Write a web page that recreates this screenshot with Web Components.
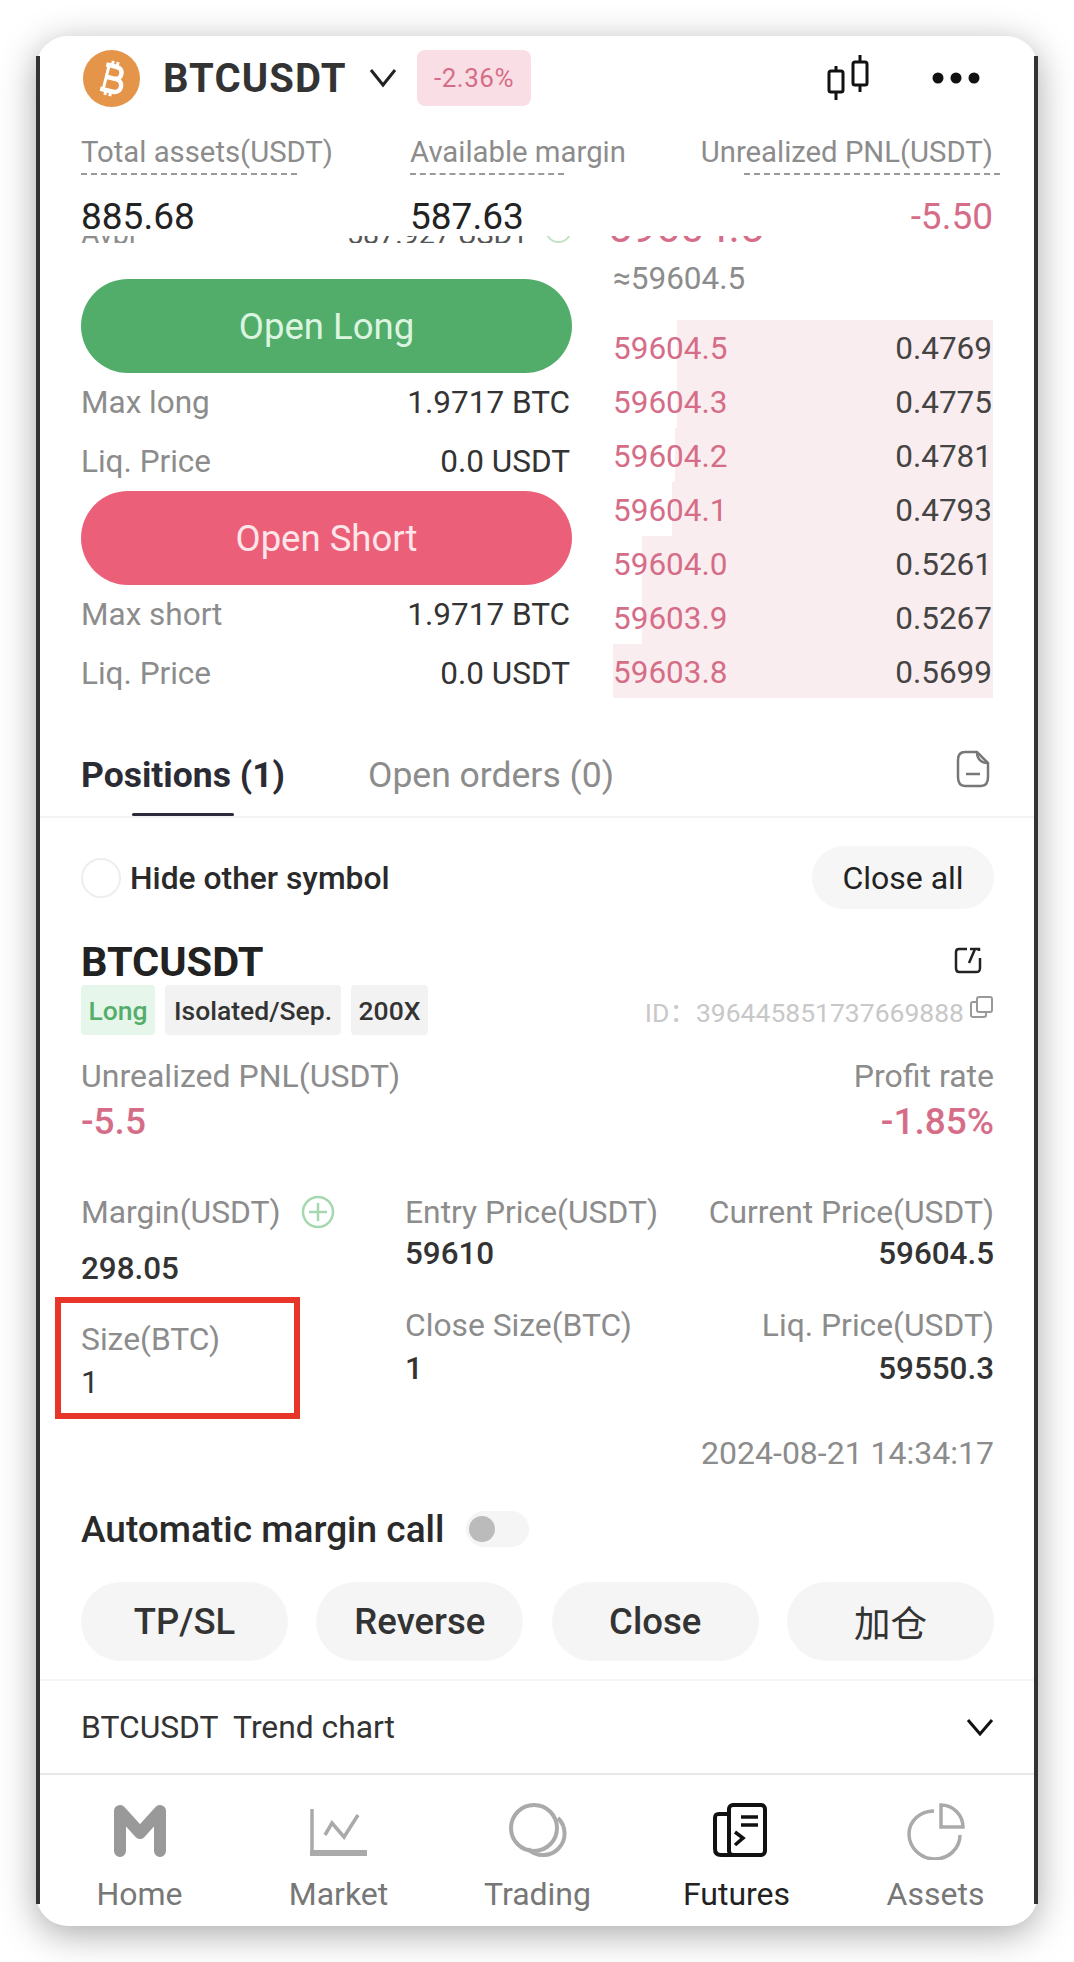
<!DOCTYPE html>
<html>
<head>
<meta charset="utf-8">
<style>
html, body { margin: 0; background: #fff; }
body { height: 1962px; font-family: Roboto, "Noto Sans CJK SC", sans-serif; color: #333; }
</style>
</head>
<body>
<trade-shell>
    <pair-header></pair-header>
    <asset-stats></asset-stats>
    <trade-panel></trade-panel>
    <position-tabs></position-tabs>
    <position-card></position-card>
    <trend-row></trend-row>
    <bottom-nav></bottom-nav>
</trade-shell>

<script>
function component(tag, html, init) {
    const template = document.createElement('template');
    template.innerHTML = html;
    customElements.define(tag, class extends HTMLElement {
        constructor() {
            super();
            this.attachShadow({ mode: 'open' });
            this.shadowRoot.appendChild(template.content.cloneNode(true));
            if (init) init(this, this.shadowRoot);
        }
    });
}

component('trade-shell', `
    <style>
    :host {
        display: block;
        position: relative;
        box-sizing: border-box;
        width: 1002px;
        height: 1890px;
        margin: 36px 0 0 36px;
        padding: 0 4px;
        background: #fff;
        border-radius: 32px;
        box-shadow: 0 8px 36px rgba(0,0,0,.34);
    }
    :host::before, :host::after {
        content: "";
        position: absolute;
        top: 20px;
        bottom: 22px;
        width: 4px;
        background: #333;
    }
    :host::before { left: 0; }
    :host::after { right: 0; }
    </style>
    <slot></slot>
`);

component('pair-header', `
    <style>
    :host {
        display: flex;
        align-items: center;
        box-sizing: border-box;
        height: 84px;
        padding: 0 54px 0 43px;
        margin-bottom: 14px;
    }
    .name { font-size: 40px; letter-spacing: 1.1px; font-weight: 700; color: #333; margin-left: 23px; width: 182px; white-space: nowrap; }
    .chevron { margin-left: 24px; }
    .badge {
        margin-left: 20px;
        width: 114px;
        height: 56px;
        display: flex;
        align-items: center;
        justify-content: center;
        background: #f9dfe5;
        border-radius: 8px;
        font-size: 26px;
        letter-spacing: .5px;
        color: #d66d88;
    }
    .right { margin-left: auto; display: flex; align-items: center; gap: 63px; }
    </style>
    <svg width="57" height="57" viewBox="0 0 57 57">
        <circle cx="28.5" cy="28.5" r="28.5" fill="#e5954a"/>
        <g transform="rotate(14 28.5 28.5)" fill="none" stroke="#fff" stroke-width="4.5">
            <path d="M20 16H31C39 16 39 28 31 28H22M22 28H33C42 28 42 41 33 41H20"/>
            <path d="M23 14V43M26 11V16M31 11V16M26 41V46M31 41V46" stroke-width="3"/>
        </g>
    </svg>
    <span class="name">BTCUSDT</span>
    <svg class="chevron" width="28" height="20" viewBox="0 0 28 20"><path d="M2 2L14 17L26 2" fill="none" stroke="#222" stroke-width="3"/></svg>
    <span class="badge">-2.36%</span>
    <div class="right">
        <svg width="42" height="46" viewBox="0 0 42 46" fill="none" stroke="#111" stroke-width="3">
            <rect x="2" y="16" width="14" height="21" rx="2"/><path d="M9 11V16M9 37V45"/>
            <rect x="26" y="7" width="14" height="23" rx="2"/><path d="M33 0V7M33 30V37"/>
        </svg>
        <svg width="48" height="12" viewBox="0 0 48 12" fill="#111">
            <circle cx="6" cy="6" r="5.5"/><circle cx="24" cy="6" r="5.5"/><circle cx="42" cy="6" r="5.5"/>
        </svg>
    </div>
`);

component('asset-stat', `
    <style>
    :host { display: flex; flex-direction: column; }
    :host([end]) { align-items: flex-end; }
    .label { font-size: 29.3px; line-height: 36px; color: #8c8c8c; white-space: nowrap; }
    .dash { height: 0; margin-top: 3px; border-top: 2px dashed #9a9a9a; }
    .value { font-size: 37px; line-height: 44px; margin-top: 20px; color: #222; }
    :host([end]) .dash { margin-right: -7px; }
    :host([neg]) .value { color: #d66d88; }
    </style>
    <div class="label"></div>
    <div class="dash"></div>
    <div class="value"><slot></slot></div>
`, (el, root) => {
    root.querySelector('.label').textContent = el.getAttribute('label');
    root.querySelector('.dash').style.width = el.getAttribute('dash') + 'px';
});

component('asset-stats', `
    <style>
    :host {
        display: grid;
        grid-template-columns: 329px 1fr auto;
        box-sizing: border-box;
        height: 98px;
        padding: 0 41px;
    }
    </style>
    <asset-stat label="Total assets(USDT)" dash="216">885.68</asset-stat>
    <asset-stat label="Available margin" dash="154">587.63</asset-stat>
    <asset-stat label="Unrealized PNL(USDT)" dash="256" end neg>-5.50</asset-stat>
`);

component('side-row', `
    <style>
    :host { display: flex; justify-content: space-between; align-items: center; height: 59px; padding-right: 2px; font-size: 31.5px; color: #333; }
    .label { color: #8c8c8c; }
    </style>
    <span class="label"></span><span><slot></slot></span>
`, (el, root) => {
    root.querySelector('.label').textContent = el.getAttribute('label');
});

component('open-button', `
    <style>
    :host {
        display: flex;
        align-items: center;
        justify-content: center;
        height: 94px;
        border-radius: 47px;
        font-size: 36.5px;
        color: #dcf5e0;
        background: #53ad6a;
    }
    :host([short]) { background: #ec5f78; color: #fde6ea; }
    </style>
    <slot></slot>
`);

component('book-row', `
    <style>
    :host {
        display: flex;
        justify-content: space-between;
        align-items: center;
        box-sizing: border-box;
        height: 54px;
        padding: 2px 1px 0 0;
        font-size: 31.5px;
        color: #444;
    }
    .price { color: #d66d88; }
    </style>
    <span class="price"></span><span><slot></slot></span>
`, (el, root) => {
    root.querySelector('.price').textContent = el.getAttribute('price');
    const d = el.getAttribute('depth') + 'px';
    el.style.background = 'linear-gradient(to left, #faedef ' + d + ', transparent ' + d + ')';
});

component('trade-panel', `
    <style>
    :host { display: block; box-sizing: border-box; height: 470px; padding: 4px 41px 0; }
    .ghost {
        display: flex;
        justify-content: space-between;
        height: 7px;
        overflow: hidden;
        align-items: flex-end;
    }
    .ghost span { white-space: nowrap; }
    .avbl { font-size: 28.6px; line-height: 30px; margin-bottom: -6px; color: #8c8c8c; width: 491px; display: flex; justify-content: space-between; align-items: flex-end; }
    .amount { margin-left: auto; margin-right: 16px; color: #555; }
    .ghost-circle { width: 27px; height: 27px; border: 2px solid #bfe3c5; border-radius: 50%; box-sizing: border-box; flex: none; margin-bottom: 6px; }
    .ghost-price { font-size: 43px; line-height: 43px; margin-bottom: -6px; color: #d66d88; margin-right: 229px; }
    .cols { display: grid; grid-template-columns: 491px 380px; column-gap: 41px; }
    .left { padding-top: 36px; }
    .ref { height: 77px; line-height: 72px; font-size: 31.5px; color: #8c8c8c; }
    </style>
    <div class="ghost">
        <div class="avbl"><span>Avbl</span><span class="amount">587.927 USDT</span><span class="ghost-circle"></span></div>
        <span class="ghost-price">59604.5</span>
    </div>
    <div class="cols">
        <div class="left">
            <open-button>Open Long</open-button>
            <side-row label="Max long">1.9717 BTC</side-row>
            <side-row label="Liq. Price">0.0 USDT</side-row>
            <open-button short>Open Short</open-button>
            <side-row label="Max short">1.9717 BTC</side-row>
            <side-row label="Liq. Price">0.0 USDT</side-row>
        </div>
        <div>
            <div class="ref">≈59604.5</div>
            <book-row price="59604.5" depth="316">0.4769</book-row>
            <book-row price="59604.3" depth="316">0.4775</book-row>
            <book-row price="59604.2" depth="318">0.4781</book-row>
            <book-row price="59604.1" depth="321">0.4793</book-row>
            <book-row price="59604.0" depth="351">0.5261</book-row>
            <book-row price="59603.9" depth="351">0.5267</book-row>
            <book-row price="59603.8" depth="380">0.5699</book-row>
        </div>
    </div>
`);

component('position-tabs', `
    <style>
    :host {
        display: flex;
        box-sizing: border-box;
        height: 116px;
        padding: 50px 44px 0 41px;
        border-bottom: 2px solid #f3f3f3;
        font-size: 35.5px;
    }
    .tab { display: flex; flex-direction: column; align-items: center; line-height: 46px; white-space: nowrap; }
    .active { font-weight: 700; color: #2b2b35; }
    .active i { display: block; width: 102px; height: 5px; margin-top: 15px; background: #2b2b3b; border-radius: 2px; }
    .other { color: #8c8c8c; margin-left: 83px; }
    svg { margin: -2px 0 0 auto; }
    </style>
    <div class="tab active">Positions (1)<i></i></div>
    <div class="tab other">Open orders (0)</div>
    <svg width="34" height="38" viewBox="0 0 34 38" fill="none" stroke="#777" stroke-width="2.5">
        <path d="M9 2H21L32 13V27C32 33 30 36 25 36H9C4 36 2 33 2 27V10C2 5 4 2 9 2Z"/>
        <path d="M21 2C21 9 25 13 32 13M10 24H24"/>
    </svg>
`);

component('info-cell', `
    <style>
    :host { display: flex; flex-direction: column; }
    :host([end]) { align-items: flex-end; }
    .label { display: flex; align-items: center; font-size: 31.8px; line-height: 36px; color: #8c8c8c; white-space: nowrap; }
    .value { font-size: 31.4px; line-height: 36px; margin-top: 6px; font-weight: 500; color: #333; }
    :host([lower]) .value { margin-top: 21px; }
    :host([wide]) .value { margin-top: 8px; }
    :host([flat]) .value { font-weight: 400; margin-top: 8px; }
    :host([mark]) { position: relative; padding-top: 14px; }
    :host([mark])::after {
        content: "";
        position: absolute;
        left: -26px;
        top: -10px;
        width: 245px;
        height: 122px;
        box-sizing: border-box;
        border: 6px solid #e8352a;
    }
    </style>
    <div class="label"><span class="text"></span><slot name="icon"></slot></div>
    <div class="value"><slot></slot></div>
`, (el, root) => {
    root.querySelector('.text').textContent = el.getAttribute('label');
});

component('tag-chip', `
    <style>
    :host {
        display: flex;
        align-items: center;
        justify-content: center;
        height: 50px;
        border-radius: 4px;
        background: #f2f2f2;
        font-size: 26.5px;
        font-weight: 500;
        color: #333;
    }
    :host([long]) { background: #e6f6ea; color: #54ad6a; }
    </style>
    <slot></slot>
`);

component('action-button', `
    <style>
    :host {
        display: flex;
        align-items: center;
        justify-content: center;
        height: 79px;
        border-radius: 40px;
        background: #f5f5f5;
        font-size: 36.5px;
        font-weight: 500;
        color: #333;
    }
    :host([light]) { font-weight: 400; }
    </style>
    <slot></slot>
`);

component('position-card', `
    <style>
    :host { display: block; padding: 28px 40px 0 41px; }
    .filter { display: flex; align-items: center; height: 63px; }
    .check { width: 40px; height: 40px; box-sizing: border-box; border: 2px solid #eee; border-radius: 50%; }
    .filter span { margin-left: 9px; font-size: 31.8px; font-weight: 500; color: #2a2a2a; }
    .close-all {
        margin-left: auto;
        width: 182px;
        height: 63px;
        display: flex;
        align-items: center;
        justify-content: center;
        border-radius: 32px;
        background: #f6f6f6;
        font-size: 32px;
        color: #222;
    }
    .title { display: flex; justify-content: space-between; align-items: center; margin-top: 29px; height: 46px; }
    .title b { font-size: 41.5px; font-weight: 700; color: #222; }
    .title svg { margin-right: 12px; margin-top: -2px; }
    .tags { display: flex; align-items: center; gap: 10px; margin-top: 1px; }
    .id { margin-left: auto; font-size: 26.5px; color: #c8c8c8; display: flex; align-items: center; white-space: pre; }
    .id svg { margin: -6px 0 0 5px; }
    .pnl { display: flex; justify-content: space-between; margin-top: 23px; }
    .pnl div { display: flex; flex-direction: column; }
    .pnl div:last-child { align-items: flex-end; }
    .pnl .l { font-size: 32px; line-height: 36px; color: #8c8c8c; }
    .pnl .v { font-size: 37px; line-height: 44px; margin-top: 6px; font-weight: 500; color: #d66d88; }
    .grid { display: grid; grid-template-columns: 324px 1fr auto; row-gap: 20px; margin-top: 50px; }
    .date { margin-top: 34px; text-align: right; font-size: 32px; line-height: 36px; color: #8c8c8c; }
    .auto { display: flex; align-items: center; height: 40px; margin-top: 38px; font-size: 37px; font-weight: 500; color: #2a2a2a; }
    .toggle { margin-left: 22px; width: 63px; height: 36px; box-sizing: border-box; padding: 5px 3px; border-radius: 18px; background: #f5f5f5; }
    .toggle i { display: block; width: 26px; height: 26px; border-radius: 50%; background: #bbb; }
    .actions { display: grid; grid-template-columns: repeat(4, 207px); justify-content: space-between; margin-top: 33px; }
    </style>
    <div class="filter">
        <div class="check"></div><span>Hide other symbol</span>
        <div class="close-all">Close all</div>
    </div>
    <div class="title">
        <b>BTCUSDT</b>
        <svg width="28" height="28" viewBox="0 0 28 28" fill="none" stroke="#222" stroke-width="2.5">
            <path d="M13 3H5C3 3 2 4 2 6V22C2 25 3 26 5 26H22C25 26 26 25 26 22V12"/>
            <path d="M15 17L21 3M16 3H25L25 5"/>
        </svg>
    </div>
    <div class="tags">
        <tag-chip long style="width:74px">Long</tag-chip>
        <tag-chip style="width:176px">Isolated/Sep.</tag-chip>
        <tag-chip style="width:77px">200X</tag-chip>
        <div class="id">ID：396445851737669888<svg width="25" height="24" viewBox="0 0 25 24" fill="none" stroke="#999" stroke-width="2">
            <rect x="8" y="2" width="15" height="15" rx="2"/><path d="M8 7H4C2 7 2 8 2 9V20C2 22 3 22 4 22H15C17 22 17 21 17 20V17"/>
        </svg></div>
    </div>
    <div class="pnl">
        <div><span class="l">Unrealized PNL(USDT)</span><span class="v">-5.5</span></div>
        <div><span class="l">Profit rate</span><span class="v">-1.85%</span></div>
    </div>
    <div class="grid">
        <info-cell label="Margin(USDT)" lower>298.05
            <svg slot="icon" width="34" height="34" viewBox="0 0 34 34" fill="none" stroke="#a5d8ae" stroke-width="2.5" style="margin-left:20px">
                <circle cx="17" cy="17" r="15"/><path d="M17 8V26M8 17H26"/>
            </svg>
        </info-cell>
        <info-cell label="Entry Price(USDT)">59610</info-cell>
        <info-cell label="Current Price(USDT)" end>59604.5</info-cell>
        <info-cell label="Size(BTC)" mark flat>1</info-cell>
        <info-cell label="Close Size(BTC)" wide>1</info-cell>
        <info-cell label="Liq. Price(USDT)" end wide>59550.3</info-cell>
    </div>
    <div class="date">2024-08-21 14:34:17</div>
    <div class="auto">Automatic margin call<div class="toggle"><i></i></div></div>
    <div class="actions">
        <action-button>TP/SL</action-button>
        <action-button>Reverse</action-button>
        <action-button>Close</action-button>
        <action-button light>加仓</action-button>
    </div>
`);

component('trend-row', `
    <style>
    :host {
        display: flex;
        justify-content: space-between;
        align-items: center;
        box-sizing: border-box;
        height: 94px;
        margin-top: 18px;
        padding: 0 40px 0 41px;
        border-top: 2px solid #f5f5f5;
        font-size: 31.8px;
        color: #333;
        white-space: pre;
    }
    </style>
    <span>BTCUSDT  Trend chart</span>
    <svg width="28" height="18" viewBox="0 0 28 18"><path d="M2 2L14 16L26 2" fill="none" stroke="#111" stroke-width="3"/></svg>
`);

component('nav-item', `
    <style>
    :host { display: flex; flex-direction: column; align-items: center; color: #777; font-size: 32px; }
    :host([active]) { color: #222; }
    .label { line-height: 36px; margin-top: 16px; }
    ::slotted(svg) { display: block; width: 60px; height: 57px; fill: none; }
    </style>
    <slot></slot>
    <span class="label"></span>
`, (el, root) => {
    root.querySelector('.label').textContent = el.getAttribute('label');
});

component('bottom-nav', `
    <style>
    :host {
        display: grid;
        grid-template-columns: repeat(5, 199px);
        box-sizing: border-box;
        height: 153px;
        padding-top: 28px;
        border-top: 2px solid #e8e8e8;
    }
    </style>
    <nav-item label="Home">
        <svg viewBox="0 0 60 57"><path d="M10 8V48M50 8V48M10 8L30 30L50 8" stroke="#999" stroke-width="12" stroke-linecap="round" stroke-linejoin="round"/></svg>
    </nav-item>
    <nav-item label="Market">
        <svg viewBox="0 0 60 57">
            <path d="M3 6V50" stroke="#aaa" stroke-width="3.5"/><path d="M1 50H58" stroke="#aaa" stroke-width="6"/>
            <path d="M16 32L23 20L35 34L49 12" stroke="#aaa" stroke-width="3.5"/>
        </svg>
    </nav-item>
    <nav-item label="Trading">
        <svg viewBox="0 0 60 57" stroke="#aaa" stroke-width="4">
            <ellipse cx="26" cy="25" rx="23" ry="23"/>
            <path d="M50 15A21.5 21.5 0 1 1 20 46"/>
        </svg>
    </nav-item>
    <nav-item label="Futures" active>
        <svg viewBox="0 0 60 57" stroke="#111" stroke-width="4">
            <rect x="22" y="2" width="36" height="50" rx="4"/>
            <path d="M22 11H12C9 11 8 12 8 15V46C8 50 10 52 14 52H54" />
            <path d="M34 14H51M34 22H51" stroke-width="3.5"/>
            <path d="M28 29L36 35L28 42" stroke-width="3.5"/>
        </svg>
    </nav-item>
    <nav-item label="Assets">
        <svg viewBox="0 0 60 57" stroke="#aaa" stroke-width="3.5">
            <path d="M35 2V24H57C57 12 47 2 35 2Z"/>
            <path d="M28 8C14 8 3 18 3 31C3 45 15 56 29 56C43 56 54 45 54 32"/>
        </svg>
    </nav-item>
`);
</script>
</body>
</html>
